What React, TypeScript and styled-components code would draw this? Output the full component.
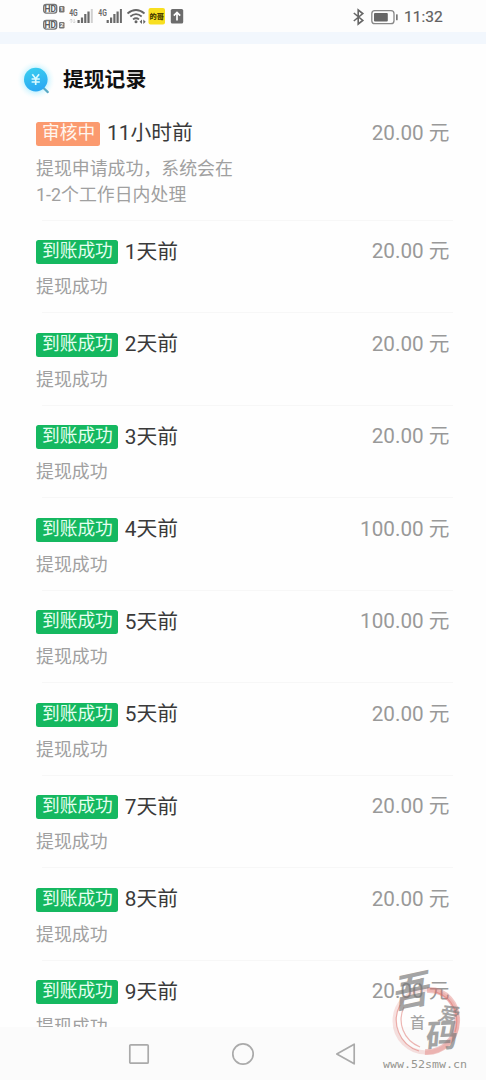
import React from 'react';
import styled, { createGlobalStyle } from 'styled-components';

const GlobalStyle = createGlobalStyle`
  * { box-sizing: border-box; }
  body { margin: 0; background: #fefefe; font-family: Roboto, "Noto Sans CJK SC", sans-serif; }
`;

const Screen = styled.div`
  position: relative;
  display: flex;
  flex-direction: column;
  width: 486px;
  height: 1080px;
  overflow: hidden;
  background: #fefefe;
`;

const StatusBar = styled.header`
  display: flex;
  justify-content: space-between;
  flex: none;
  height: 32px;
  padding: 0 43px 0 42px;
  background: #fdfdfd;
`;

const StatusIcons = styled.svg`
  display: block;
  height: 32px;
`;

const StatusRight = styled.div`
  display: flex;
  align-items: center;
  height: 33px;
`;

const Clock = styled.span`
  width: 39px;
  margin-left: 5px;
  font-size: 15.5px;
  line-height: 20px;
  white-space: nowrap;
  color: #606060;
  -webkit-text-stroke: 0.2px #606060;
`;

const Band = styled.div`
  flex: none;
  height: 12px;
  background: #f2f7fd;
`;

const Content = styled.main`
  flex: 1;
  min-height: 0;
  overflow: hidden;
`;

const TitleRow = styled.div`
  display: flex;
  align-items: center;
  height: 58px;
  padding: 10px 0 0 17px;
`;

const Title = styled.h1`
  margin: 3px 0 0 6px;
  font-size: 20.8px;
  line-height: 30px;
  font-weight: 700;
  color: #111;
`;

const TitleIcon = styled.svg`
  display: block;
  width: 40px;
  height: 40px;
  margin-top: 3px;
`;

const Record = styled.section`
  margin: 0 33px 0 36px;
  padding: 15px 3.5px 13px 0;
  background: linear-gradient(#f7f7f7, #f7f7f7) right bottom / calc(100% - 6px) 1px no-repeat;
`;

const RecordHead = styled.div`
  display: flex;
  align-items: center;
  height: 31px;
  margin-bottom: 7.5px;
`;

const Tag = styled.span<{ $pending?: boolean }>`
  height: 24px;
  margin-top: 2px;
  padding: 0 5px 0 6px;
  border-radius: 2.5px;
  background: ${(p) => (p.$pending ? '#fb9a6f' : '#15b860')};
  color: ${(p) => (p.$pending ? '#fff6ee' : '#e4fff0')};
  font-size: 17.7px;
  line-height: 23.6px;
  white-space: nowrap;
`;

const Time = styled.span`
  flex: 1;
  margin: 1px 0 0 7px;
  font-size: 20.8px;
  line-height: 30px;
  color: #3a3a3a;
`;

const Amount = styled.span`
  font-size: 20.7px;
  line-height: 30px;
  color: #999;
`;

const Description = styled.p`
  width: 210px;
  margin: 0;
  font-size: 17.9px;
  line-height: 26px;
  color: #a0a0a0;
  white-space: pre-line;
`;

const NavBar = styled.nav`
  display: flex;
  flex: none;
  align-items: center;
  height: 53px;
  padding-left: 127px;
  gap: 80px;
  background: #fbfbfb;
`;

const NavIcon = styled.svg`
  display: block;
  width: 24px;
  height: 24px;
  fill: none;
  stroke: #aaa;
  stroke-width: 1.7;
  stroke-linejoin: round;
`;

const Watermark = styled.svg`
  position: absolute;
  left: 378px;
  top: 964px;
  width: 100px;
  height: 112px;
`;

type Entry = { time: string; amount: string; pending?: boolean };

const entries: Entry[] = [
  { time: '11小时前', amount: '20.00', pending: true },
  { time: '1天前', amount: '20.00' },
  { time: '2天前', amount: '20.00' },
  { time: '3天前', amount: '20.00' },
  { time: '4天前', amount: '100.00' },
  { time: '5天前', amount: '100.00' },
  { time: '5天前', amount: '20.00' },
  { time: '7天前', amount: '20.00' },
  { time: '8天前', amount: '20.00' },
  { time: '9天前', amount: '20.00' },
];

function HdBadge({ y, sim }: { y: number; sim: string }) {
  return (
    <g>
      <rect x="1.7" y={y} width="13" height="8.6" rx="2.5" fill="none" stroke="#777" strokeWidth="1.4" />
      <text x="8.2" y={y + 7.3} textAnchor="middle" fontSize="8.5" fontWeight="700" fill="#5c5c5c">HD</text>
      <rect x="17" y={y + 1.5} width="5.5" height="6.5" rx="1.2" fill="#777" />
      <text x="19.75" y={y + 6.9} textAnchor="middle" fontSize="6" fontWeight="700" fill="#fff">{sim}</text>
    </g>
  );
}

function Signal({ x, weak }: { x: number; weak?: boolean }) {
  return (
    <g fill="#6a6a6a">
      <text x={x} y="16" fontSize="9" fontWeight="700" textLength="8.5" lengthAdjust="spacingAndGlyphs">4G</text>
      <rect x={x + 8.3} y="20" width="2.2" height="3" />
      <rect x={x + 11.7} y="17.5" width="2.2" height="5.5" />
      <rect x={x + 15} y="14" width="2.2" height="9" />
      <rect x={x + 18.2} y="11.5" width="2.2" height="11.5" />
      <rect x={x + 21.6} y="9" width="2" height="14" fill={weak ? '#d0d0d0' : '#6a6a6a'} />
      {weak && <path d="M3 19v4m-1.5-2.5L3 19l1.5 1.5M6 19v4m-1.5-1.5L6 23l1.5-1.5" transform={`translate(${x - 1} 0)`} fill="none" stroke="#ccc" strokeWidth=".7" />}
    </g>
  );
}

function LeftStatus() {
  return (
    <StatusIcons width="145" viewBox="0 0 145 32">
      <HdBadge y={4.5} sim="1" />
      <HdBadge y={20.5} sim="2" />
      <Signal x={27.2} weak />
      <Signal x={56.3} />
      <g fill="none" stroke="#666" strokeWidth="1.8">
        <path d="M85.5 13.5Q94 6.5 102.5 13.5" />
        <path d="M88.3 16.5Q94 11.8 99.7 16.5" />
        <path d="M91 19.4Q94 17 97 19.4" />
      </g>
      <circle cx="94" cy="21.8" r="1.5" fill="#666" />
      <path d="M100 19.5l-2.4 2.3 2.4 2.2zM101.3 19.5l2.4 2.3-2.4 2.2z" fill="#666" />
      <rect x="106.5" y="8" width="16.5" height="16.5" rx="2" fill="#f8df20" />
      <text x="114.7" y="18.8" textAnchor="middle" fontSize="7.2" fontWeight="900" fill="#4d4300">的哥</text>
      <rect x="128.8" y="9" width="12.4" height="14.5" rx="1.6" fill="#6c6c6c" />
      <path d="M135 20.5V12.5M131.8 15.6L135 12.4l3.2 3.2" fill="none" stroke="#fff" strokeWidth="1.7" />
    </StatusIcons>
  );
}

function RightStatus() {
  return (
    <StatusIcons width="48" viewBox="0 0 48 32">
      <path d="M2.8 12l9 7.4-4.6 3.6V9l4.6 3.6L2.8 20" fill="none" stroke="#666" strokeWidth="1.6" />
      <rect x="20.8" y="9.7" width="22.2" height="13" rx="3" fill="none" stroke="#888" strokeWidth="1.3" />
      <rect x="23" y="12" width="13.8" height="8.4" rx="1" fill="#666" />
      <rect x="45" y="13.3" width="1.7" height="6" rx=".5" fill="#777" />
    </StatusIcons>
  );
}

function YuanIcon() {
  return (
    <TitleIcon viewBox="0 0 40 40">
      <defs>
        <linearGradient id="disc" x1="0" y1="0" x2="0.3" y2="1">
          <stop offset="0" stopColor="#3bd0ef" />
          <stop offset="1" stopColor="#2baaf3" />
        </linearGradient>
        <radialGradient id="halo">
          <stop offset="0.6" stopColor="#c9f3ff" />
          <stop offset="1" stopColor="#effcff" stopOpacity="0" />
        </radialGradient>
      </defs>
      <circle cx="19" cy="20" r="19" fill="url(#halo)" />
      <path d="M26 27.5l4.8 4.6" stroke="#58a9c5" strokeWidth="2.2" strokeLinecap="round" />
      <circle cx="18.8" cy="19.6" r="11.8" fill="url(#disc)" />
      <path d="M15.3 14.2l3.4 4.5 3.4-4.5M14.6 19h8.2M14.6 22h8.2M18.7 18.7v6.2" fill="none" stroke="#d8faff" strokeWidth="1.7" />
    </TitleIcon>
  );
}

function SiteMark() {
  return (
    <Watermark viewBox="0 0 100 112">
      <g fill="none" stroke="#dd6f6a">
        <circle cx="48" cy="57" r="31.5" strokeWidth="4" opacity=".2" />
        <path d="M49 26C68 25 80 40 79 58S64 89 47 88" strokeWidth="6" opacity=".38" />
        <path d="M22 41C13 58 21 81 41 87M26 43C19 58 25 76 42 83" strokeWidth="1.2" opacity=".5" />
        <path d="M58 28C76 34 82 52 77 68" strokeWidth="1.2" opacity=".5" />
      </g>
      <g fill="#777" opacity=".66" fontFamily='"Noto Sans CJK SC", sans-serif' fontWeight="700">
        <text transform="translate(15 45) rotate(-12) skewX(-16)" fontSize="38">吾</text>
        <text x="32" y="64" fontSize="15" fontWeight="500">首</text>
        <text transform="translate(59 56) rotate(10) skewX(-10)" fontSize="20">爱</text>
        <text transform="translate(47 84) rotate(-3) skewX(-8)" fontSize="32">码</text>
      </g>
      <text x="5" y="103.5" fontSize="11" fontFamily='"DejaVu Sans Mono", monospace' fill="#969690" textLength="84" lengthAdjust="spacingAndGlyphs">www.52smw.cn</text>
    </Watermark>
  );
}

export default function App() {
  return (
    <>
      <GlobalStyle />
      <Screen>
        <StatusBar>
          <LeftStatus />
          <StatusRight>
            <RightStatus />
            <Clock>11:32</Clock>
          </StatusRight>
        </StatusBar>
        <Band />
        <Content>
          <TitleRow>
            <YuanIcon />
            <Title>提现记录</Title>
          </TitleRow>
          {entries.map((e, i) => (
            <Record key={i}>
              <RecordHead>
                <Tag $pending={e.pending}>{e.pending ? '审核中' : '到账成功'}</Tag>
                <Time>{e.time}</Time>
                <Amount>{e.amount} 元</Amount>
              </RecordHead>
              <Description>{e.pending ? '提现申请成功，系统会在\n1-2个工作日内处理' : '提现成功'}</Description>
            </Record>
          ))}
        </Content>
        <NavBar>
          <NavIcon viewBox="0 0 24 24"><rect x="2.8" y="2.8" width="18.4" height="18.4" rx="1" /></NavIcon>
          <NavIcon viewBox="0 0 24 24"><circle cx="12" cy="12" r="10.2" /></NavIcon>
          <NavIcon viewBox="0 0 24 24"><path d="M19.2 2.2v19.6L1.8 12z" /></NavIcon>
        </NavBar>
        <SiteMark />
      </Screen>
    </>
  );
}
